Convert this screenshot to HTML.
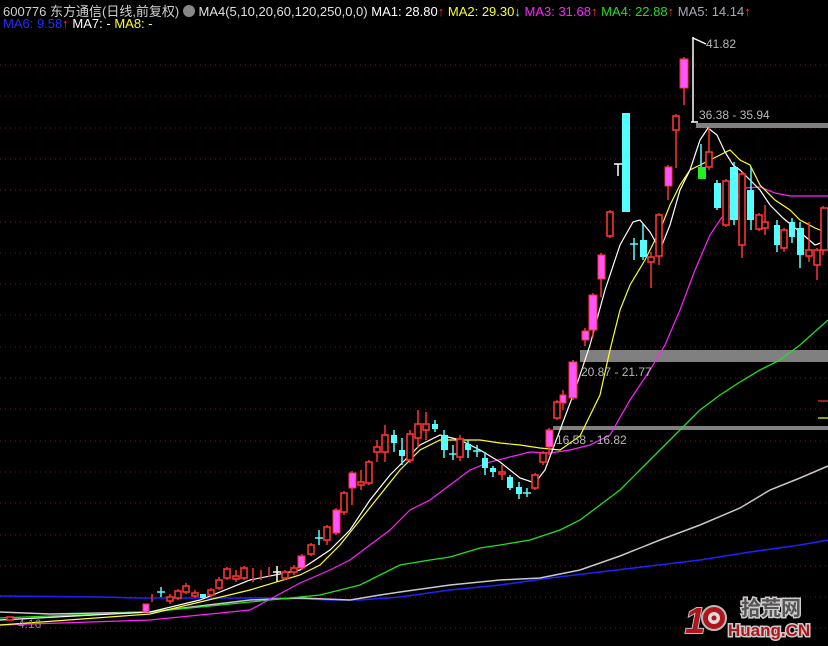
<!DOCTYPE html>
<html><head><meta charset="utf-8"><style>
html,body{margin:0;padding:0;background:#000;width:828px;height:646px;overflow:hidden}
.h{position:absolute;left:3px;font-family:"Liberation Sans","Noto Sans CJK SC",sans-serif;font-size:13px;white-space:nowrap;color:#d0d0d0}
</style></head><body>
<svg width="828" height="646" style="position:absolute;left:0;top:0" xmlns="http://www.w3.org/2000/svg">
<g stroke="#8a1010" stroke-width="1" stroke-dasharray="1,4">
<line x1="0" y1="65" x2="828" y2="65"/><line x1="0" y1="96" x2="828" y2="96"/><line x1="0" y1="128" x2="828" y2="128"/><line x1="0" y1="159" x2="828" y2="159"/><line x1="0" y1="190" x2="828" y2="190"/><line x1="0" y1="222" x2="828" y2="222"/><line x1="0" y1="253" x2="828" y2="253"/><line x1="0" y1="284" x2="828" y2="284"/><line x1="0" y1="315" x2="828" y2="315"/><line x1="0" y1="347" x2="828" y2="347"/><line x1="0" y1="378" x2="828" y2="378"/><line x1="0" y1="409" x2="828" y2="409"/><line x1="0" y1="441" x2="828" y2="441"/><line x1="0" y1="472" x2="828" y2="472"/><line x1="0" y1="503" x2="828" y2="503"/><line x1="0" y1="535" x2="828" y2="535"/><line x1="0" y1="566" x2="828" y2="566"/><line x1="0" y1="597" x2="828" y2="597"/><line x1="0" y1="628" x2="828" y2="628"/>
</g>
<!-- gray bars -->
<rect x="696" y="123" width="132" height="5" fill="#808080"/>
<rect x="580" y="350" width="248" height="12" fill="#808080"/>
<rect x="553" y="426" width="275" height="4" fill="#808080"/>
<!-- MAs -->
<g fill="none" stroke-width="1.2">
<polyline stroke="#2020ff" stroke-width="1.6" points="0,596 100,597 140,598 200,598 280,598 330,600 360,600 400,597 450,590 500,585 550,578 600,572 650,566 700,560 750,552 800,545 828,540"/>
<polyline stroke="#c8c8c8" stroke-width="1.5" points="0,612 50,614 100,613 150,612 250,600 300,598 350,600 380,595 400,592 450,585 500,580 540,578 580,570 620,556 660,540 700,525 740,508 770,490 800,478 828,466"/>
<polyline stroke="#22e022" stroke-width="1.3" points="0,618 150,612 250,602 320,595 360,585 400,565 430,560 450,557 480,548 500,545 530,540 560,530 580,520 600,505 620,490 640,470 660,450 680,430 700,410 720,395 740,382 760,370 780,360 800,345 828,320"/>
<polyline stroke="#ff22ff" points="0,625 150,620 250,610 300,583 330,570 350,560 370,545 390,530 410,510 430,500 450,485 470,470 490,462 510,457 530,452 550,453 570,450 590,445 610,435 630,400 650,370 665,345 680,310 695,270 710,235 720,220 735,200 745,188 760,187 775,193 790,196 810,196 828,196"/>
<polyline stroke="#ffff22" points="0,625 150,614 250,590 300,575 320,565 340,545 360,520 380,495 400,470 420,450 440,440 460,440 480,440 500,443 520,445 540,448 560,450 580,436 600,395 610,350 620,310 630,285 645,260 660,230 670,205 680,185 690,170 700,165 710,160 720,155 730,150 740,160 750,165 760,185 775,200 790,210 800,220 815,228 825,232"/>
<polyline stroke="#ffffff" points="0,620 150,612 200,600 250,580 300,570 330,550 350,530 370,500 390,475 420,445 440,435 460,440 480,450 500,462 520,478 535,483 545,470 560,430 575,390 590,345 605,290 620,245 633,222 640,220 650,232 660,250 670,225 680,190 690,170 700,140 708,128 717,135 725,152 733,165 740,170 750,180 760,190 770,205 783,218 800,232 815,245 828,240"/>
</g>
<!-- wicks -->
<g stroke-width="1.5">
<g stroke="#ff3232">
<line x1="549" y1="428" x2="549" y2="455"/><line x1="557" y1="400" x2="557" y2="420"/><line x1="563" y1="390" x2="563" y2="410"/><line x1="573" y1="360" x2="573" y2="400"/><line x1="585" y1="328" x2="585" y2="346"/><line x1="593" y1="293" x2="593" y2="337"/><line x1="601" y1="253" x2="601" y2="297"/><line x1="610" y1="210" x2="610" y2="238"/><line x1="651" y1="252" x2="651" y2="288"/><line x1="659" y1="213" x2="659" y2="265"/><line x1="668" y1="165" x2="668" y2="200"/><line x1="676" y1="114" x2="676" y2="168"/><line x1="684" y1="57" x2="684" y2="105"/><line x1="709" y1="128" x2="709" y2="170"/><line x1="726" y1="179" x2="726" y2="227"/><line x1="742" y1="172" x2="742" y2="258"/><line x1="759" y1="213" x2="759" y2="231"/><line x1="765" y1="205" x2="765" y2="235"/><line x1="784" y1="228" x2="784" y2="252"/><line x1="809" y1="222" x2="809" y2="262"/><line x1="817" y1="248" x2="817" y2="280"/><line x1="823" y1="206" x2="823" y2="255"/>
<line x1="302" y1="554" x2="302" y2="570"/><line x1="311" y1="543" x2="311" y2="556"/><line x1="327" y1="525" x2="327" y2="545"/><line x1="336" y1="508" x2="336" y2="535"/><line x1="344" y1="491" x2="344" y2="515"/><line x1="352" y1="471" x2="352" y2="505"/><line x1="361" y1="470" x2="361" y2="490"/><line x1="369" y1="460" x2="369" y2="485"/><line x1="377" y1="440" x2="377" y2="462"/><line x1="385" y1="425" x2="385" y2="462"/><line x1="410" y1="430" x2="410" y2="463"/><line x1="418" y1="410" x2="418" y2="448"/><line x1="426" y1="412" x2="426" y2="440"/><line x1="460" y1="435" x2="460" y2="461"/><line x1="502" y1="465" x2="502" y2="480"/><line x1="535" y1="473" x2="535" y2="490"/><line x1="543" y1="451" x2="543" y2="465"/>
<line x1="152" y1="594" x2="152" y2="602"/><line x1="170" y1="594" x2="170" y2="604"/><line x1="178" y1="589" x2="178" y2="600"/><line x1="186" y1="583" x2="186" y2="594"/><line x1="195" y1="590" x2="195" y2="598"/><line x1="211" y1="588" x2="211" y2="597"/><line x1="219" y1="577" x2="219" y2="590"/><line x1="227" y1="567" x2="227" y2="580"/><line x1="236" y1="570" x2="236" y2="582"/><line x1="244" y1="566" x2="244" y2="580"/><line x1="253" y1="568" x2="253" y2="582"/><line x1="261" y1="570" x2="261" y2="580"/><line x1="269" y1="567" x2="269" y2="577"/><line x1="285" y1="570" x2="285" y2="580"/><line x1="294" y1="565" x2="294" y2="575"/>
</g>
<g stroke="#54ffff">
<line x1="634" y1="238" x2="634" y2="260"/><line x1="643" y1="224" x2="643" y2="260"/><line x1="701" y1="144" x2="701" y2="170"/><line x1="734" y1="162" x2="734" y2="225"/><line x1="751" y1="167" x2="751" y2="230"/><line x1="777" y1="220" x2="777" y2="252"/><line x1="792" y1="218" x2="792" y2="243"/><line x1="800" y1="222" x2="800" y2="268"/><line x1="717" y1="180" x2="717" y2="210"/>
<line x1="319" y1="530" x2="319" y2="545"/><line x1="394" y1="430" x2="394" y2="452"/><line x1="402" y1="438" x2="402" y2="465"/><line x1="435" y1="420" x2="435" y2="432"/><line x1="444" y1="430" x2="444" y2="458"/><line x1="453" y1="445" x2="453" y2="460"/><line x1="468" y1="440" x2="468" y2="458"/><line x1="477" y1="445" x2="477" y2="457"/><line x1="485" y1="452" x2="485" y2="475"/><line x1="493" y1="466" x2="493" y2="477"/><line x1="510" y1="475" x2="510" y2="490"/><line x1="519" y1="482" x2="519" y2="499"/><line x1="527" y1="488" x2="527" y2="497"/><line x1="161" y1="587" x2="161" y2="597"/>
<line x1="315" y1="538" x2="323" y2="538"/><line x1="449" y1="454" x2="457" y2="454"/><line x1="473" y1="451" x2="481" y2="451"/><line x1="523" y1="493" x2="531" y2="493"/><line x1="157" y1="592" x2="165" y2="592"/><line x1="630" y1="244" x2="638" y2="244"/>
</g>
</g>
<!-- pink filled -->
<g fill="#ff55ff" stroke="#ff3232" stroke-width="1">
<rect x="546" y="430" width="7" height="17"/><rect x="560" y="395" width="6" height="8"/><rect x="569" y="362" width="8" height="36"/><rect x="582" y="331" width="7" height="9"/><rect x="589" y="295" width="8" height="35"/><rect x="598" y="255" width="7" height="24"/><rect x="665" y="167" width="7" height="19"/><rect x="680" y="59" width="8" height="29"/>
<rect x="298" y="556" width="7" height="12"/><rect x="333" y="510" width="7" height="23"/><rect x="349" y="473" width="7" height="15"/><rect x="143" y="604" width="6" height="8"/>
</g>
<!-- red hollow -->
<g fill="#000" stroke="#ff3232" stroke-width="1.6">
<rect x="554" y="402" width="6" height="16"/><rect x="607" y="212" width="6" height="24"/><rect x="648" y="257" width="6" height="5"/><rect x="656" y="215" width="6" height="41"/><rect x="673" y="116" width="6" height="14"/><rect x="706" y="152" width="6" height="15"/><rect x="723" y="181" width="6" height="44"/><rect x="739" y="174" width="6" height="71"/><rect x="756" y="215" width="6" height="14"/><rect x="762" y="222" width="6" height="6"/><rect x="781" y="230" width="6" height="18"/><rect x="806" y="250" width="6" height="6"/><rect x="814" y="250" width="6" height="15"/><rect x="821" y="208" width="7" height="42"/>
<rect x="308" y="545" width="6" height="9"/><rect x="324" y="527" width="6" height="13"/><rect x="341" y="493" width="6" height="19"/><rect x="358" y="482" width="6" height="3"/><rect x="366" y="462" width="6" height="21"/><rect x="374" y="447" width="6" height="5"/><rect x="382" y="435" width="6" height="17"/><rect x="407" y="434" width="6" height="26"/><rect x="415" y="424" width="6" height="14"/><rect x="423" y="424" width="6" height="6"/><rect x="457" y="439" width="6" height="18"/><rect x="499" y="472" width="6" height="2"/><rect x="532" y="475" width="6" height="13"/><rect x="540" y="453" width="6" height="9"/>
<rect x="7" y="617" width="6" height="3"/><rect x="175" y="591" width="6" height="7"/><rect x="183" y="586" width="6" height="6"/><rect x="192" y="593" width="6" height="3"/><rect x="208" y="590" width="6" height="5"/><rect x="216" y="580" width="6" height="8"/><rect x="224" y="569" width="6" height="9"/><rect x="241" y="568" width="6" height="10"/><rect x="282" y="572" width="6" height="6"/><rect x="167" y="597" width="6" height="4"/><rect x="233" y="576" width="6" height="3"/><rect x="291" y="568" width="6" height="4"/>
</g>
<!-- cyan filled -->
<g fill="#54ffff">
<rect x="622" y="113" width="8" height="99"/><rect x="640" y="240" width="7" height="17"/><rect x="714" y="183" width="7" height="25"/><rect x="730" y="167" width="8" height="53"/><rect x="747" y="190" width="7" height="30"/><rect x="774" y="225" width="6" height="20"/><rect x="789" y="222" width="6" height="15"/><rect x="797" y="228" width="7" height="27"/>
<rect x="391" y="435" width="6" height="8"/><rect x="399" y="450" width="6" height="6"/><rect x="432" y="424" width="6" height="5"/><rect x="441" y="435" width="7" height="15"/><rect x="465" y="444" width="6" height="6"/><rect x="482" y="458" width="6" height="10"/><rect x="490" y="468" width="6" height="4"/><rect x="507" y="477" width="6" height="11"/><rect x="516" y="487" width="6" height="7"/><rect x="200" y="594" width="6" height="4"/>
</g>
<rect x="698" y="167" width="8" height="12" fill="#22ee22"/>
<!-- white marks -->
<g stroke="#fff" stroke-width="1.5" fill="none">
<line x1="693" y1="37" x2="693" y2="122"/><line x1="691" y1="122" x2="698" y2="122"/><line x1="693" y1="38" x2="706" y2="44"/>
<line x1="618" y1="164" x2="618" y2="176"/><line x1="614" y1="164" x2="622" y2="164"/>
<line x1="277" y1="566" x2="277" y2="582"/><line x1="273" y1="572" x2="281" y2="572"/>
</g>
<line x1="818" y1="401" x2="828" y2="401" stroke="#ff3232" stroke-width="1.2"/>
<line x1="818" y1="418" x2="828" y2="418" stroke="#ffff22" stroke-width="1.2"/>
<g font-family="Liberation Sans, sans-serif" font-size="12" fill="#b8b8b8">
<text x="706" y="48">41.82</text>
<text x="699" y="119">36.38 - 35.94</text>
<text x="581" y="376">20.87 - 21.77</text>
<text x="556" y="444">16.58 - 16.82</text>
<text x="18" y="628" fill="#888">4.16</text>
</g>
<!-- logo -->
<g font-family="Liberation Sans, sans-serif" font-weight="bold">
<text x="685" y="633" font-size="36" fill="#b0151a" stroke="#bbb" stroke-width="2" paint-order="stroke" font-style="italic">1</text>
<circle cx="714" cy="618" r="12" fill="#b0151a" stroke="#bbb" stroke-width="2"/>
<circle cx="714" cy="618" r="6" fill="#ddd"/>
<circle cx="714" cy="618" r="2.5" fill="#b0151a"/>
<text x="741" y="615" font-size="20" fill="#555" stroke="#ccc" stroke-width="3" paint-order="stroke" font-family="Noto Sans CJK SC, sans-serif">拾荒网</text>
<text x="728" y="636" font-size="17" fill="#b0151a" stroke="#ccc" stroke-width="3" paint-order="stroke">Huang.CN</text>
</g>
</svg>
<div class="h" style="top:1px">600776 东方通信(日线,前复权) <span style="display:inline-block;width:12px;height:12px;border-radius:6px;background:#888;vertical-align:-1px"></span> <span style="color:#e0e0e0">MA4(5,10,20,60,120,250,0,0)</span> <span style="color:#fff">MA1: 28.80</span><span style="color:#ff3232">↑</span> <span style="color:#ffff22">MA2: 29.30</span><span style="color:#54ffff">↓</span> <span style="color:#ff22ff">MA3: 31.68</span><span style="color:#ff3232">↑</span> <span style="color:#22dd22">MA4: 22.88</span><span style="color:#ff3232">↑</span> <span style="color:#aab">MA5: 14.14</span><span style="color:#ff3232">↑</span></div>
<div class="h" style="top:16px"><span style="color:#2030ff">MA6: 9.58</span><span style="color:#ff3232">↑</span> <span style="color:#fff">MA7: -</span> <span style="color:#ffff22">MA8: -</span></div>
</body></html>
